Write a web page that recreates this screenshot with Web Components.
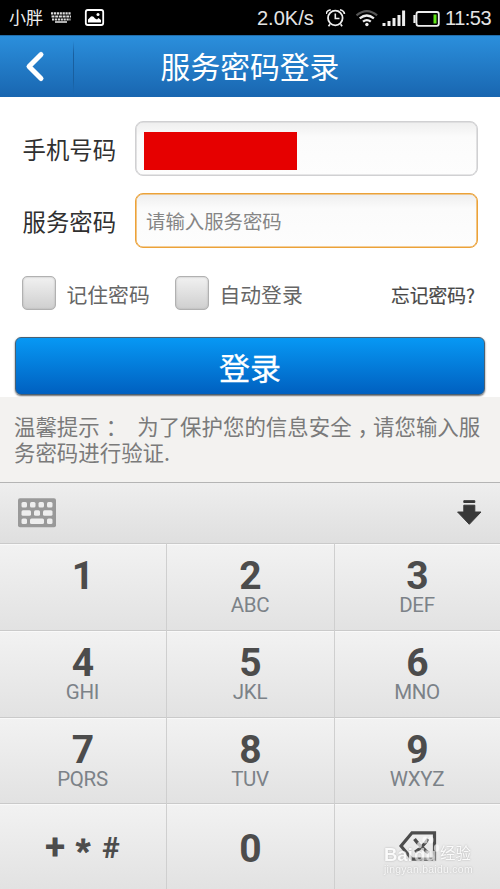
<!DOCTYPE html>
<html lang="zh-CN"><head><meta charset="utf-8"><title>服务密码登录</title>
<style>
html,body{margin:0;width:500px;height:889px;overflow:hidden;background:#fff}
body{font-family:"Liberation Sans","Noto Sans CJK SC",sans-serif}
</style></head><body>
<login-screen></login-screen>
<script>
const define=(name,css,html)=>customElements.define(name,class extends HTMLElement{
  constructor(){super();const t=document.createElement('template');
    t.innerHTML=`<style>*{box-sizing:border-box}:host{display:block;box-sizing:border-box}${css}</style>${typeof html==='function'?html(this):html}`;
    this.attachShadow({mode:'open'}).append(t.content.cloneNode(true));}
});

define('status-bar',`
:host{display:flex;height:35px;background:#000;color:#e4e4e4;font-size:20px;line-height:36px;padding:0 8px 0 9px;align-items:flex-start;white-space:nowrap}
svg{display:block;flex:none;height:35px}
.name{font:17px/34px "Noto Sans CJK SC",sans-serif;width:42px;color:#eee}
.speed{width:69px;margin-left:auto}.time{width:47px;margin-left:3px;letter-spacing:-.5px}`,`
<span class="name">小胖</span>
<svg width="54" height="35" viewBox="51 0 54 35">
 <g stroke="#ddd" stroke-width="2.2" fill="none"><path d="M51 13.4h20" stroke-dasharray="2.2 .7"/><path d="M51.5 16.5h19.5" stroke-dasharray="3 .7"/><path d="M52 19.5h18.5" stroke-dasharray="2.2 .7"/><path d="M55 22h12" stroke-width="1.6"/></g>
 <rect x="85.8" y="10" width="17.4" height="15" rx="2" fill="none" stroke="#fff" stroke-width="1.8"/>
 <path d="M88 22.5v-3l3-3q2-1 4 2l2 1 1.5-1.5 2.5 2v2.5z" fill="#fff"/><circle cx="98" cy="14.5" r="1.5" fill="#fff"/>
</svg>
<span class="speed">2.0K/s</span>
<svg width="116" height="35" viewBox="327 0 116 35" fill="none" stroke="#eee">
 <circle cx="336.3" cy="18" r="7.3" stroke-width="1.8"/><path d="M336.3 13.5v5h4.2" stroke-width="1.6"/><path d="M327.2 14q0-3 4.5-4.2M345.4 14q0-3-4.5-4.2M331 24.3l-1.5 2M341.6 24.3l1.5 2" stroke-width="1.7"/>
 <path d="M357.5 15.3q10.3-8.5 20.6 0" stroke="#555" stroke-width="2.2"/><path d="M360.7 18.4q7.1-5.8 14.2 0M364 21.7q3.9-3.2 7.8 0" stroke-width="2.3"/><circle cx="367.9" cy="24.5" r="1.7" fill="#eee" stroke="none"/>
 <path d="M385 26v-3M390 26v-5M395 26v-8M400 26v-11M404.6 26v-15.5" stroke-width="3"/>
 <rect x="417.5" y="12" width="22.3" height="13.8" rx="2" stroke-width="1.8"/><path d="M415.5 15v8" stroke-width="2.2"/><path d="M436 14.5v9" stroke="#5ee516" stroke-width="3"/>
</svg>
<span class="time">11:53</span>`);

define('nav-bar',`
:host{display:grid;grid-template-columns:74px 1fr 74px;height:62px;background:linear-gradient(#2b8fdc,#1966b0);border-top:1px solid #226da9;color:#fff}
.back{height:52px;margin-top:5px;border-right:1px solid #195f9f;box-shadow:1px 0 #398dce;-webkit-mask:linear-gradient(transparent,#000 25%,#000 75%,transparent)}
.back svg{display:block}h1{margin:0;text-align:center;font:29.8px/58px "Noto Sans CJK SC",sans-serif}`,`
<div class="back"><svg width="73" height="52" viewBox="0 41 73 52"><path d="M41 54.5L29 66.5l12 12" fill="none" stroke="#fff" stroke-width="5" stroke-linecap="round" stroke-linejoin="round"/></svg></div><h1><slot></slot></h1>`);

define('form-field',`
:host{display:grid;grid-template-columns:113px 343px;height:55px;align-items:center}
label{font:23.4px/50px "Noto Sans CJK SC",sans-serif;color:#303030;white-space:nowrap;padding-left:.5px}
.box{height:55px;border:1px solid #d0d0d2;border-radius:8px;background:linear-gradient(#eee,#fbfbfb 28%,#fdfdfd);box-shadow:inset 0 0 0 .6px #d0d0d2;display:flex;align-items:center;padding-left:9px}
:host([active]) .box{border-color:#eca238;box-shadow:inset 0 0 0 .6px #eca238;padding-left:10px}
.box ::slotted(*){font:19.4px/50px "Noto Sans CJK SC",sans-serif;color:#858585}`,
el=>`<label>${el.getAttribute('label')}</label><div class="box"><slot></slot></div>`);

define('redacted-value',`:host{width:153px;height:38px;background:#e60000;margin-top:4px;margin-left:-1px}`,'');

define('check-option',`
:host{display:flex;align-items:center;width:153px;height:34px}
i{width:34px;height:34px;border:1.5px solid #b1b1b1;border-radius:5px;background:linear-gradient(#f1f1f1,#cfcfcf);box-shadow:inset 0 0 2px #aaa}
span{font:20.8px/34px "Noto Sans CJK SC",sans-serif;color:#666;margin-left:10.5px;padding-top:2px;white-space:nowrap}`,`<i></i><span><slot></slot></span>`);

define('submit-button',`
:host{height:58px;margin:0 15px;border:1px solid #496073;border-radius:6px;background:linear-gradient(#0798f4,#0060c0);box-shadow:0 1px 2px #666;color:#fff;text-align:center;font:31px/57px "Noto Sans CJK SC",sans-serif;-webkit-text-stroke:.3px #fff}`,`<slot></slot>`);

define('hint-panel',`
:host{height:85px;margin-top:2px;background:#f3f2f0;padding:16px 0 0 14px;color:#7a7a7a;font:21.45px/26px "Noto Sans CJK SC",sans-serif;white-space:nowrap}
::slotted(b){display:inline-block;font-weight:400;font-feature-settings:"halt";margin:0 4.75px 0 6px}::slotted(u){display:inline-block;width:16px}`,`<slot></slot>`);

define('keyboard-bar',`
:host{display:flex;justify-content:space-between;height:61px;border-top:1px solid #b4b4b4;background:linear-gradient(#eee,#dfdfdf);padding:15px 18px}
svg{display:block}`,`
<svg width="38" height="30" viewBox="0 0 38 30"><rect width="38" height="29" y=".3" rx="2" fill="#999"/><g fill="#eee"><rect x="3.5" y="4" width="5.5" height="5.5" rx="1.5"/><rect x="12" y="4" width="5.5" height="5.5" rx="1.5"/><rect x="20.5" y="4" width="5.5" height="5.5" rx="1.5"/><rect x="29" y="4" width="5.5" height="5.5" rx="1.5"/><rect x="3.5" y="12.2" width="9.5" height="5.5" rx="1.5"/><rect x="16" y="12.2" width="6" height="5.5" rx="1.5"/><rect x="25" y="12.2" width="9.5" height="5.5" rx="1.5"/><rect x="3.5" y="20.5" width="5.5" height="5.5" rx="1.5"/><rect x="12" y="20.5" width="14" height="5.5" rx="1.5"/><rect x="29" y="20.5" width="5.5" height="5.5" rx="1.5"/></g></svg>
<svg width="25" height="30" viewBox="457 498 25 30"><g fill="#383838" stroke="#383838" stroke-linejoin="round"><path d="M463.8 500.7h11v1.8h-11zM463.8 505.2h11v6.8h6.2l-11.7 12.3-11.7-12.3h6.2z" stroke-width="1"/></g></svg>`);

define('dial-key',`
:host{height:100%;background:linear-gradient(#f2f2f2,#e2e2e2);border-top:1px solid #cacaca;border-right:1px solid #cfcfcf;box-shadow:inset 0 1px #f9f9f9;text-align:center;font-family:Roboto,sans-serif;padding-top:9px}
:host([last]){border-right:0}
:host([solo]){padding-top:22px}
.n{font-weight:700;font-size:39px;line-height:46px;color:#4c4c4c}
.l{font-size:20.5px;line-height:24px;color:#7c8288;letter-spacing:-.3px;margin-top:-6px;padding-right:1px}
.n ::slotted(svg){display:block;margin:0 auto;position:relative;top:5px}`,
el=>`<div class="n"><slot></slot></div>${el.hasAttribute('letters')?`<div class="l">${el.getAttribute('letters')}</div>`:''}`);

define('symbol-set',`:host{display:flex;justify-content:center;height:46px;font-weight:700;color:#4c4c4c}
span{display:block;text-align:center}
.p{width:30px;font-size:37px;line-height:41px}.s{width:26px;font-size:32px;line-height:48px;-webkit-text-stroke:1px #4c4c4c}.h{width:30px;font-size:30px;line-height:43px}`,`<span class="p">+</span><span class="s">*</span><span class="h">#</span>`);

define('dial-pad',`:host{display:grid;grid-template-columns:167px 168px 165px;grid-template-rows:87px 87px 86px 86px;height:346px}`,`
<dial-key>1</dial-key><dial-key letters="ABC">2</dial-key><dial-key last letters="DEF">3</dial-key>
<dial-key letters="GHI">4</dial-key><dial-key letters="JKL">5</dial-key><dial-key last letters="MNO">6</dial-key>
<dial-key letters="PQRS">7</dial-key><dial-key letters="TUV">8</dial-key><dial-key last letters="WXYZ">9</dial-key>
<dial-key solo><symbol-set></symbol-set></dial-key><dial-key solo>0</dial-key>
<dial-key solo last><svg width="38" height="30" viewBox="0 0 38 30" fill="none" stroke="#4c4c4c" stroke-width="3.2"><path d="M2 15L13 1.8h22.5v26.4H13z"/><path d="M15.5 8q4 6 14 14M29 8q-5 8-13 13"/></svg></dial-key>`);

define('page-watermark',`
:host{position:absolute;left:383px;top:834px;width:92px;height:46px;color:#fff;opacity:.8;white-space:nowrap;text-shadow:0 0 2px #999}
.brand{position:absolute;left:1px;top:11px;font:700 18.5px/20px "Liberation Sans",sans-serif}
.cn{position:absolute;left:57px;top:8px;font:15.5px/20px "Noto Sans CJK SC",sans-serif}
.url{position:absolute;left:1px;top:29px;font:10.4px/14px "Liberation Sans",sans-serif;letter-spacing:.3px;opacity:.9}
svg{position:absolute;left:34px;top:0;opacity:.8}`,`
<svg width="24" height="30" viewBox="417 834 24 30" fill="#fff"><ellipse cx="419.5" cy="845" rx="2.4" ry="3.3"/><ellipse cx="425" cy="840" rx="2.5" ry="3.6"/><ellipse cx="431" cy="840" rx="2.5" ry="3.6"/><ellipse cx="436.5" cy="848" rx="2.6" ry="3.8"/><path d="M424 852q4-6 7 0 6 5 2 8h-9q-4-3 0-8" opacity=".65"/></svg>
<span class="brand">Bai</span><span class="brand" style="left:31px;opacity:.75">du</span><span class="cn">经验</span><span class="url">jingyan.baidu.com</span>`);

define('login-screen',`
:host{width:500px;height:889px;position:relative;overflow:hidden;background:#fff}
form{display:grid;row-gap:17px;padding:24px 22px 0;height:179px;align-content:start}
.options{display:flex;align-items:center;height:34px;padding:0 25px 0 22px}
.forgot{margin-left:auto;font:18.8px/34px "Noto Sans CJK SC",sans-serif;color:#484848;-webkit-text-stroke:.2px #484848;padding-top:3px;white-space:nowrap}
submit-button{margin-top:27px}`,`
<status-bar></status-bar><nav-bar>服务密码登录</nav-bar>
<form><form-field label="手机号码"><redacted-value></redacted-value></form-field><form-field label="服务密码" active><span>请输入服务密码</span></form-field></form>
<div class="options"><check-option>记住密码</check-option><check-option>自动登录</check-option><span class="forgot">忘记密码?</span></div>
<submit-button>登录</submit-button>
<hint-panel>温馨提示<b>：</b><u></u>为了保护您的信息安全<b>，</b>请您输入服<br>务密码进行验证.</hint-panel>
<keyboard-bar></keyboard-bar><dial-pad></dial-pad><page-watermark></page-watermark>`);
</script></body></html>
